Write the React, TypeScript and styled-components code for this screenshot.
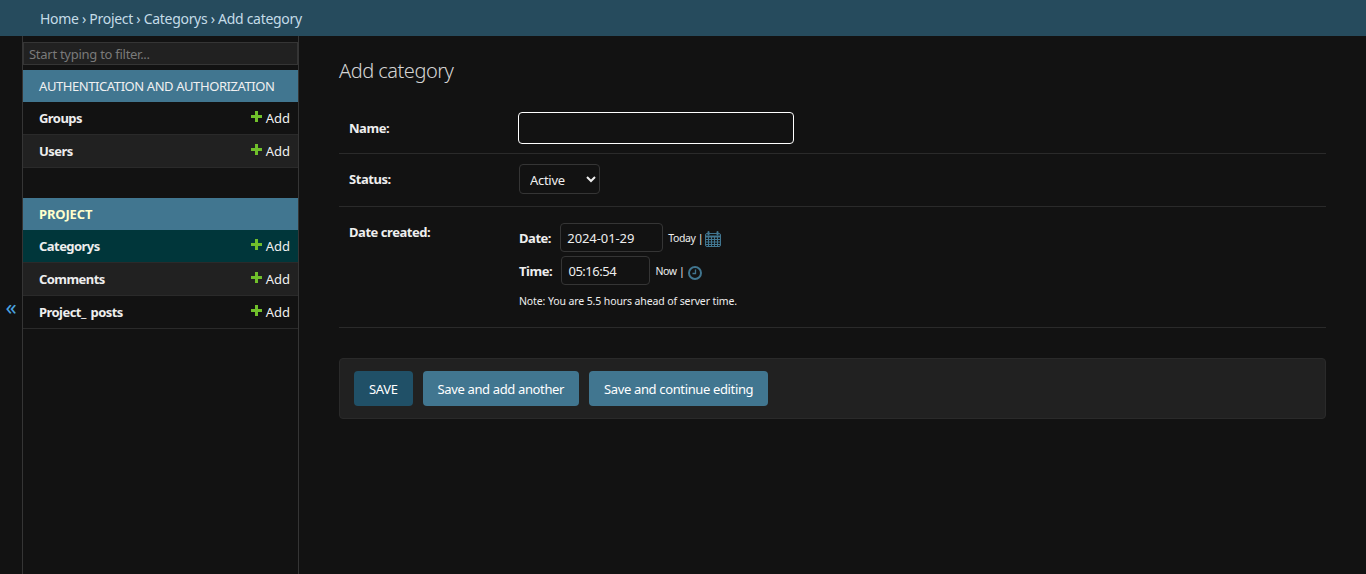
import styled, { createGlobalStyle } from "styled-components"

const GlobalStyle = createGlobalStyle`
  html, body {
    margin: 0;
    padding: 0;
    height: 100%;
    background: #121212;
    color: #eeeeee;
    font-family: "Noto Sans", "Open Sans", sans-serif;
    font-size: 13px;
  }
  * { box-sizing: border-box; }
`

const sections = [
  { title: "AUTHENTICATION AND AUTHORIZATION", current: false, models: ["Groups", "Users"] },
  { title: "PROJECT", current: true, models: ["Categorys", "Comments", "Project_ posts"] },
]

function PlusIcon() {
  return (
    <svg width="11" height="11" viewBox="0 0 11 11">
      <path d="M4 0h3v4h4v3h-4v4h-3v-4h-4v-3h4z" fill="#70bf2b" />
    </svg>
  )
}

function CalendarIcon() {
  return (
    <svg width="16" height="16" viewBox="0 0 16 16" fill="none" stroke="#417690">
      <path d="M3.5 1v2.5M12.5 1v2.5" strokeWidth="2" strokeLinecap="round" />
      <rect x="0.5" y="2.5" width="15" height="13" rx="1.5" />
      <path d="M0.5 5.5h15" strokeWidth="2" />
      <path d="M3.5 6v9.5M6.5 6v9.5M9.5 6v9.5M12.5 6v9.5M0.5 8.5h15M0.5 11h15M0.5 13.5h15" strokeWidth="1" />
    </svg>
  )
}

function ClockIcon() {
  return (
    <svg width="14" height="14" viewBox="0 0 14 14" fill="none" stroke="#417690">
      <circle cx="7" cy="7" r="6" strokeWidth="2" />
      <path d="M7.5 3.5v4h-3" strokeWidth="1.3" />
    </svg>
  )
}

function App() {
  return (
    <>
      <GlobalStyle />
      <StPage>
        <StBreadcrumbs>Home › Project › Categorys › Add category</StBreadcrumbs>
        <StMain>
          <StToggle>«</StToggle>
          <StSidebar>
            <StFilter placeholder="Start typing to filter..." />
            {sections.map((section) => (
              <StModule key={section.title}>
                <StCaption $current={section.current}>{section.title}</StCaption>
                {section.models.map((model, index) => (
                  <StModelRow key={model} $selected={model === "Categorys"} $alt={index % 2 === 1}>
                    <StModelName>{model}</StModelName>
                    <StAddLink>
                      <PlusIcon />
                      Add
                    </StAddLink>
                  </StModelRow>
                ))}
              </StModule>
            ))}
          </StSidebar>
          <StContent>
            <StTitle>Add category</StTitle>
            <StFormRow $height={49}>
              <StLabel>Name:</StLabel>
              <StNameInput />
            </StFormRow>
            <StFormRow $height={53}>
              <StLabel>Status:</StLabel>
              <StSelect defaultValue="Active">
                <option>Active</option>
                <option>Inactive</option>
              </StSelect>
            </StFormRow>
            <StDateRow>
              <StLabel>Date created:</StLabel>
              <StDateFields>
                <StDateLine>
                  <StFieldLabel>Date:</StFieldLabel>
                  <StDateInput $width={103} $spacing={-0.1} defaultValue="2024-01-29" />
                  <StShortcut $gap={2} $iconTop={3}>Today |</StShortcut>
                  <CalendarIcon />
                </StDateLine>
                <StDateLine>
                  <StFieldLabel>Time:</StFieldLabel>
                  <StDateInput $width={89} $spacing={-0.5} defaultValue="05:16:54" />
                  <StShortcut $gap={4} $iconTop={5}>Now |</StShortcut>
                  <ClockIcon />
                </StDateLine>
                <StNote>Note: You are 5.5 hours ahead of server time.</StNote>
              </StDateFields>
            </StDateRow>
            <StSubmitRow>
              <StButton $primary>SAVE</StButton>
              <StButton>Save and add another</StButton>
              <StButton>Save and continue editing</StButton>
            </StSubmitRow>
          </StContent>
        </StMain>
      </StPage>
    </>
  )
}

export default App

const StPage = styled.div`
  display: flex;
  flex-direction: column;
  height: 574px;
  overflow: hidden;
`

const StBreadcrumbs = styled.div`
  flex: none;
  height: 36px;
  padding: 0 40px;
  display: flex;
  align-items: center;
  background: #264b5d;
  color: #c4dce8;
  font-size: 14px;
  letter-spacing: -0.3px;
`

const StMain = styled.div`
  flex: 1;
  display: flex;
  min-height: 0;
`

const StToggle = styled.div`
  flex: none;
  width: 23px;
  display: flex;
  align-items: center;
  justify-content: center;
  padding-top: 2px;
  border-right: 1px solid #353535;
  color: #4aa3e0;
  font-size: 22px;
`

const StSidebar = styled.div`
  flex: none;
  width: 276px;
  padding-top: 6px;
  border-right: 1px solid #353535;
`

const StFilter = styled.input`
  display: block;
  width: 100%;
  height: 23px;
  margin-bottom: 5px;
  padding: 0 5px;
  background: #212121;
  border: 1px solid #353535;
  color: #eeeeee;
  font-family: inherit;
  font-size: 13px;
  letter-spacing: -0.27px;

  &::placeholder {
    color: #7a7a7a;
    opacity: 1;
  }
`

const StModule = styled.div`
  margin-bottom: 30px;
`

const StCaption = styled.div<{ $current: boolean }>`
  height: 32px;
  padding: 0 16px;
  display: flex;
  align-items: center;
  white-space: nowrap;
  background: #417690;
  color: ${(p) => (p.$current ? "#ffffcc" : "#f0f0f0")};
  font-size: 13px;
  font-weight: ${(p) => (p.$current ? 700 : 400)};
  letter-spacing: ${(p) => (p.$current ? "-0.15px" : "-0.42px")};
`

const StModelRow = styled.div<{ $selected: boolean; $alt: boolean }>`
  height: 33px;
  padding: 0 8px 0 16px;
  display: flex;
  align-items: center;
  justify-content: space-between;
  background: ${(p) => (p.$selected ? "#00363a" : p.$alt ? "#212121" : "#121212")};
  border-bottom: 1px solid #2a2a2a;
`

const StModelName = styled.span`
  color: #eeeeee;
  font-size: 13px;
  font-weight: 700;
  letter-spacing: -0.55px;
  word-spacing: 2px;
`

const StAddLink = styled.span`
  display: flex;
  align-items: center;
  gap: 4px;
  color: #f0f0f0;
  font-size: 13px;

  svg {
    margin-top: -3px;
  }
`

const StContent = styled.div`
  flex: 1;
  min-width: 0;
  padding: 0 40px;
`

const StTitle = styled.h1`
  margin: 0;
  height: 69px;
  padding-top: 20px;
  color: #d4d4d4;
  font-size: 20px;
  line-height: 30px;
  font-weight: 300;
  letter-spacing: -0.5px;
`

const StFormRow = styled.div<{ $height: number }>`
  height: ${(p) => p.$height}px;
  padding: 0 10px 2px;
  display: flex;
  align-items: center;
  border-bottom: 1px solid #2a2a2a;
`

const StDateRow = styled.div`
  height: 121px;
  padding: 16px 10px 0;
  display: flex;
  border-bottom: 1px solid #2a2a2a;
`

const StLabel = styled.label`
  flex: none;
  width: 169px;
  padding-right: 10px;
  color: #eeeeee;
  font-size: 13px;
  font-weight: 700;
  letter-spacing: -0.46px;
`

const StNameInput = styled.input`
  width: 276px;
  height: 32px;
  background: #121212;
  border: 1px solid #ffffff;
  border-radius: 4px;
  color: #eeeeee;
`

const StSelect = styled.select`
  width: 81px;
  height: 30px;
  margin-left: 1px;
  padding: 2px 6px 0;
  color-scheme: dark;
  background: #121212;
  border: 1px solid #353535;
  border-radius: 4px;
  color: #eeeeee;
  font-family: inherit;
  font-size: 13px;
  letter-spacing: -0.3px;
`

const StDateFields = styled.div`
  display: flex;
  flex-direction: column;
  padding-left: 1px;
`

const StDateLine = styled.div`
  height: 29px;
  margin-bottom: 4px;
  display: flex;
  align-items: center;
`

const StFieldLabel = styled.span`
  margin-right: 9.3px;
  color: #eeeeee;
  font-size: 13px;
  font-weight: 700;
  letter-spacing: -0.46px;
`

const StDateInput = styled.input<{ $width: number; $spacing: number }>`
  width: ${(p) => p.$width}px;
  height: 29px;
  padding: 0 6px;
  background: #121212;
  border: 1px solid #353535;
  border-radius: 4px;
  color: #eeeeee;
  font-family: inherit;
  font-size: 13px;
  letter-spacing: ${(p) => p.$spacing}px;
`

const StShortcut = styled.span<{ $gap: number; $iconTop: number }>`
  margin: 0 ${(p) => p.$gap}px 0 5px;
  color: #eeeeee;
  font-size: 10.5px;
  letter-spacing: -0.4px;

  & + svg {
    margin-top: ${(p) => p.$iconTop}px;
  }
`

const StNote = styled.div`
  margin-top: 5px;
  color: #eeeeee;
  font-size: 10.5px;
  letter-spacing: -0.11px;
`

const StSubmitRow = styled.div`
  height: 61px;
  margin-top: 30px;
  padding: 12px 14px 0;
  display: flex;
  gap: 10px;
  background: #212121;
  border: 1px solid #2a2a2a;
  border-radius: 4px;
`

const StButton = styled.button<{ $primary?: boolean }>`
  height: 35px;
  padding: 0 15px;
  background: ${(p) => (p.$primary ? "#205067" : "#417690")};
  border: none;
  border-radius: 4px;
  color: #ffffff;
  font-family: inherit;
  font-size: 13px;
  letter-spacing: -0.36px;
`
